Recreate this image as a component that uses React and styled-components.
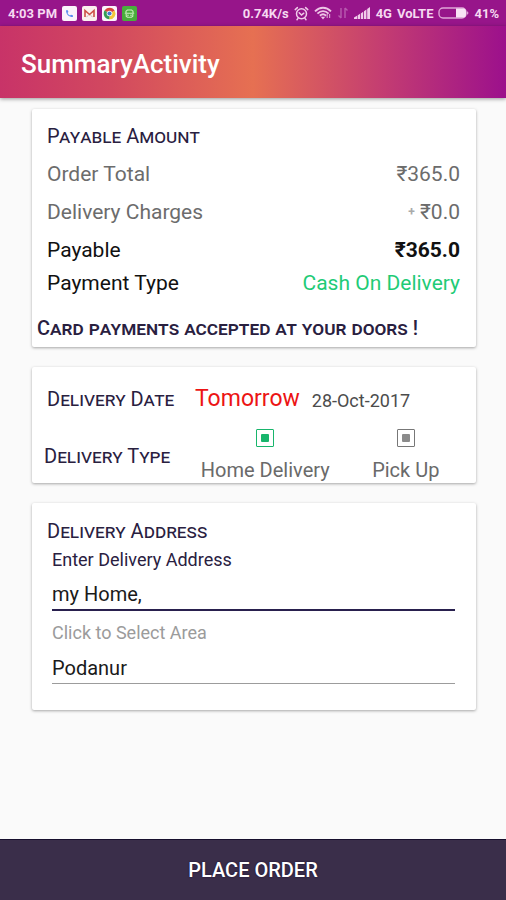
import React, { useState } from "react";
import styled, { createGlobalStyle } from "styled-components";

const GlobalStyle = createGlobalStyle`
  *, *::before, *::after { box-sizing: border-box; }
  body {
    margin: 0;
    background: #fafafa;
    color: #111;
    font-family: Roboto, "Noto Sans", sans-serif;
  }
  h1, h2, p, dl, dt, dd, fieldset { margin: 0; padding: 0; border: 0; }
`;

const Screen = styled.div`
  min-height: 100vh;
  display: flex;
  flex-direction: column;
`;

const StatusBar = styled.div`
  display: flex;
  align-items: center;
  justify-content: space-between;
  height: 26px;
  padding: 0 7px 0 8px;
  background: #97158a;
  color: #f6d9f1;
  font-size: 13px;
  font-weight: 700;
  white-space: nowrap;
`;

const StatusGroup = styled.div`
  display: flex;
  align-items: center;
  gap: ${(p) => p.$gap}px;

  svg { display: block; flex: none; }
`;

const AppBar = styled.header`
  display: flex;
  align-items: center;
  height: 72px;
  padding: 4px 21px 0;
  background: linear-gradient(90deg, #c83368 0%, #d2495f 22%, #e67052 50%, #c33c72 76%, #9c108c 100%);
  box-shadow: 0 1px 4px rgba(0, 0, 0, 0.4);
`;

const AppTitle = styled.h1`
  color: #fff;
  font-size: 26px;
  font-weight: 500;
  line-height: 32px;
`;

const Content = styled.main`
  flex: 1;
  display: flex;
  flex-direction: column;
  gap: 20px;
  padding: 11px 30px 20px 32px;
`;

const Card = styled.section`
  background: #fff;
  border-radius: 2px;
  box-shadow: 0 1px 3px rgba(0, 0, 0, 0.34);
`;

const SummaryCard = styled(Card)`
  padding: 8px 0 3px;
`;

const ScheduleCard = styled(Card)`
  padding-top: 14px;
`;

const AddressCard = styled(Card)`
  padding: 12px 21px 26px 20px;
`;

const SmallCaps = styled.h2`
  color: #29203f;
  font-family: Roboto, sans-serif;
  font-size: 20px;
  font-weight: 400;
  font-variant-caps: small-caps;
  line-height: ${(p) => p.$line || 32}px;
  white-space: nowrap;
`;

const SummaryTitle = styled(SmallCaps)`
  padding: 0 15px;
`;

const AddressTitle = styled(SmallCaps)`
  margin-left: -5px;
`;

const Note = styled(SmallCaps).attrs({ as: "p" })`
  margin-top: 15px;
  padding-left: 5px;
  font-weight: 500;
`;

const Amounts = styled.dl`
  padding: 0 16px 0 15px;
`;

const AmountRow = styled.div`
  display: flex;
  justify-content: space-between;
  color: ${(p) => (p.$muted ? "#6c6c6c" : "#111")};
  font-size: 21px;
  line-height: ${(p) => (p.$compact ? 28 : 38)}px;
`;

const Amount = styled.dd`
  color: ${(p) => (p.$accent ? "#1fcb77" : "inherit")};
  font-weight: ${(p) => (p.$strong ? 700 : 400)};
`;

const Plus = styled.span`
  color: #aaa;
  font-size: 12px;
  font-weight: 700;
  vertical-align: 3px;
`;

const DateRow = styled.div`
  display: flex;
  align-items: center;
  padding-left: 15px;
`;

const DateLabel = styled(SmallCaps)`
  flex: 0 0 148px;
`;

const Day = styled.span`
  color: #ec1414;
  font-size: 23px;
  line-height: 36px;
`;

const DateText = styled.time`
  margin-left: 12px;
  padding-top: 3px;
  color: #4c4c4c;
  font-size: 18px;
`;

const TypeRow = styled.fieldset`
  display: flex;
  align-items: center;
  min-width: 0;
  padding-left: 12px;
`;

const TypeLabel = styled(SmallCaps)`
  flex: 0 0 151px;
  padding-top: 12px;
`;

const Option = styled.label`
  flex: 1;
  display: flex;
  flex-direction: column;
  align-items: center;
  gap: 10px;
  padding-top: 12px;
  color: #6a6a6a;
  font-size: 20px;
  line-height: 26px;
  white-space: nowrap;
`;

const SquareRadio = styled.input`
  appearance: none;
  display: grid;
  place-items: center;
  width: 18px;
  height: 18px;
  margin: 0;
  border: 1px solid currentColor;
  border-radius: 1px;
  color: #777;

  &::before {
    content: "";
    width: 8px;
    height: 8px;
    border-radius: 1px;
    background: currentColor;
    opacity: 0.85;
  }

  &:checked { color: #18b56c; }
  &:checked::before { opacity: 1; }
`;

const Field = styled.div`
  display: flex;
  flex-direction: column;
  margin-top: ${(p) => (p.$spaced ? 9 : 0)}px;
`;

const FieldLabel = styled.label`
  color: ${(p) => (p.$active ? "#29203f" : "#9b9b9b")};
  font-size: 18px;
  line-height: 26px;
`;

const TextBox = styled.input`
  width: 100%;
  height: 38px;
  padding: 6px 0 0;
  border: 0;
  border-bottom: ${(p) => (p.$active ? "2px solid #29204e" : "1px solid #9c9c9c")};
  border-radius: 0;
  outline: 0;
  background: none;
  color: #1a1a1a;
  font-family: inherit;
  font-size: 20px;
  line-height: 28px;
`;

const PlaceOrder = styled.button`
  height: 61px;
  border: 0;
  border-top: 1px solid #170f2d;
  background: #3a2e4a;
  color: #fff;
  font-family: inherit;
  font-size: 20px;
  font-weight: 500;
  text-shadow: 0 0 2px #17102e;
`;

const PhoneIcon = () => (
  <svg width="15" height="15" viewBox="0 0 15 15" aria-hidden="true">
    <rect width="15" height="15" rx="2" fill="#fbf4fb" />
    <path d="M4 4.2c0 4 2.8 6.8 6.9 6.9V9.3L9 8.7l-1 .9C6.8 9 6 8.2 5.5 7.1l.9-1-.6-1.9z" fill="#5a8df0" />
  </svg>
);

const MailIcon = () => (
  <svg width="15" height="15" viewBox="0 0 15 15" aria-hidden="true">
    <rect width="15" height="15" rx="2" fill="#fbf0ee" />
    <path d="M3 11V4.5l4.5 4 4.5-4V11" fill="none" stroke="#cc5046" strokeWidth="1.6" />
    <path d="M4.4 11.2l2-2M10.6 11.2l-2-2" stroke="#c9b9b7" />
  </svg>
);

const BrowserIcon = () => (
  <svg width="15" height="15" viewBox="0 0 15 15" aria-hidden="true">
    <rect width="15" height="15" rx="2" fill="#fbf4fb" />
    <path d="M7.5 7.5L2.5 4.6a5.8 5.8 0 0 1 10.2.2z" fill="#d9453a" />
    <path d="M7.5 7.5l5.2-2.8a5.8 5.8 0 0 1-5.5 8.6z" fill="#f3c63a" />
    <path d="M7.5 7.5l-.2 5.8A5.8 5.8 0 0 1 2.5 4.6z" fill="#369b55" />
    <circle cx="7.5" cy="7.5" r="2.8" fill="#fff" />
    <circle cx="7.5" cy="7.5" r="2.1" fill="#4278cf" />
  </svg>
);

const RobotIcon = () => (
  <svg width="15" height="15" viewBox="0 0 15 15" aria-hidden="true">
    <rect width="15" height="15" rx="2" fill="#48ae3c" />
    <path d="M4 6.8V5.2L5.4 4h4.2L11 5.2v1.6M2.8 7.3h9.4M4.2 8v2.2l1.3 1h4l1.3-1V8" fill="none" stroke="#c9efbd" strokeWidth="1.1" />
    <circle cx="6" cy="9.2" r=".7" fill="#d9f5cf" />
    <circle cx="9" cy="9.2" r=".7" fill="#d9f5cf" />
  </svg>
);

const AlarmIcon = () => (
  <svg width="15" height="15" viewBox="0 0 15 15" fill="none" stroke="#f0cbea" strokeWidth="1.5" strokeLinecap="round" aria-hidden="true">
    <circle cx="7.5" cy="7.8" r="5" />
    <path d="M1.2 3.6l2.2-2M13.8 3.6l-2.2-2M5.2 6.8L7.5 9l2.3-1.8M4 12.4l-1 1.3M11 12.4l1 1.3" />
  </svg>
);

const WifiIcon = () => (
  <svg width="18" height="14" viewBox="0 0 18 14" fill="none" stroke="#edc5e6" strokeWidth="1.9" aria-hidden="true">
    <path d="M1 5.4c4.8-4.8 11.2-4.8 16 0M3.4 7.6c3.4-3.3 7.8-3.3 11.2 0M5.9 9.8c1.9-1.8 4.3-1.8 6.2 0" />
    <path d="M6.8 10.8h4.4L9 13.4z" fill="#edc5e6" stroke="none" />
    <path d="M13.2 8v4M15.6 12V8" stroke="#d59bcd" strokeWidth="1.2" />
  </svg>
);

const DataIcon = () => (
  <svg width="12" height="14" viewBox="0 0 12 14" fill="none" stroke="#b85bb0" strokeWidth="1.4" aria-hidden="true">
    <path d="M4 2v10M1.5 9.5L4 12M8 12V2M10.5 4.5L8 2" />
  </svg>
);

const SignalIcon = () => (
  <svg width="17" height="12" viewBox="0 0 17 12" fill="#f0cbea" aria-hidden="true">
    <path d="M0 10.4l3-1.6V12H0zM3.6 8.4l2.4-1.6V12H3.6zM6.8 6.4l2.4-1.6V12H6.8zM10 4.2l2.4-1.6V12H10zM13.2 2L16 0v12h-2.8z" />
  </svg>
);

const BatteryIcon = () => (
  <svg width="31" height="12" viewBox="0 0 31 12" aria-hidden="true">
    <rect x="1" y="1" width="27" height="10" rx="4" fill="none" stroke="#dfa5d7" strokeWidth="1.4" />
    <path d="M18 1.5h7a3 3 0 0 1 3 3v3a3 3 0 0 1-3 3h-7z" fill="#f8e3f5" />
    <path d="M29 4l1.6 2L29 8z" fill="#dfa5d7" />
  </svg>
);

export default function App() {
  const [type, setType] = useState("home");
  const [address, setAddress] = useState("my Home,");
  const [area, setArea] = useState("Podanur");

  return (
    <Screen>
      <GlobalStyle />
      <StatusBar>
        <StatusGroup $gap={5}>
          <span>4:03 PM</span>
          <StatusGroup $gap={5}>
            <PhoneIcon />
            <MailIcon />
            <BrowserIcon />
            <RobotIcon />
          </StatusGroup>
        </StatusGroup>
        <StatusGroup $gap={5}>
          <span>0.74K/s</span>
          <AlarmIcon />
          <WifiIcon />
          <DataIcon />
          <SignalIcon />
          <span>4G</span>
          <span>VoLTE</span>
          <BatteryIcon />
          <span>41%</span>
        </StatusGroup>
      </StatusBar>
      <AppBar>
        <AppTitle>SummaryActivity</AppTitle>
      </AppBar>
      <Content>
        <SummaryCard>
          <SummaryTitle $line={38}>Payable Amount</SummaryTitle>
          <Amounts>
            <AmountRow $muted>
              <dt>Order Total</dt>
              <Amount>₹365.0</Amount>
            </AmountRow>
            <AmountRow $muted>
              <dt>Delivery Charges</dt>
              <Amount><Plus>+</Plus> ₹0.0</Amount>
            </AmountRow>
            <AmountRow>
              <dt>Payable</dt>
              <Amount $strong>₹365.0</Amount>
            </AmountRow>
            <AmountRow $compact>
              <dt>Payment Type</dt>
              <Amount $accent>Cash On Delivery</Amount>
            </AmountRow>
          </Amounts>
          <Note>Card payments accepted at your doors !</Note>
        </SummaryCard>
        <ScheduleCard>
          <DateRow>
            <DateLabel>Delivery Date</DateLabel>
            <Day>Tomorrow</Day>
            <DateText dateTime="2017-10-28">28-Oct-2017</DateText>
          </DateRow>
          <TypeRow aria-labelledby="delivery-type">
            <TypeLabel id="delivery-type">Delivery Type</TypeLabel>
            <Option>
              <SquareRadio type="radio" name="type" checked={type === "home"} onChange={() => setType("home")} />
              Home Delivery
            </Option>
            <Option>
              <SquareRadio type="radio" name="type" checked={type === "pickup"} onChange={() => setType("pickup")} />
              Pick Up
            </Option>
          </TypeRow>
        </ScheduleCard>
        <AddressCard>
          <AddressTitle>Delivery Address</AddressTitle>
          <Field>
            <FieldLabel $active htmlFor="address">Enter Delivery Address</FieldLabel>
            <TextBox $active id="address" value={address} onChange={(e) => setAddress(e.target.value)} />
          </Field>
          <Field $spaced>
            <FieldLabel htmlFor="area">Click to Select Area</FieldLabel>
            <TextBox id="area" value={area} onChange={(e) => setArea(e.target.value)} />
          </Field>
        </AddressCard>
      </Content>
      <PlaceOrder type="button">PLACE ORDER</PlaceOrder>
    </Screen>
  );
}
